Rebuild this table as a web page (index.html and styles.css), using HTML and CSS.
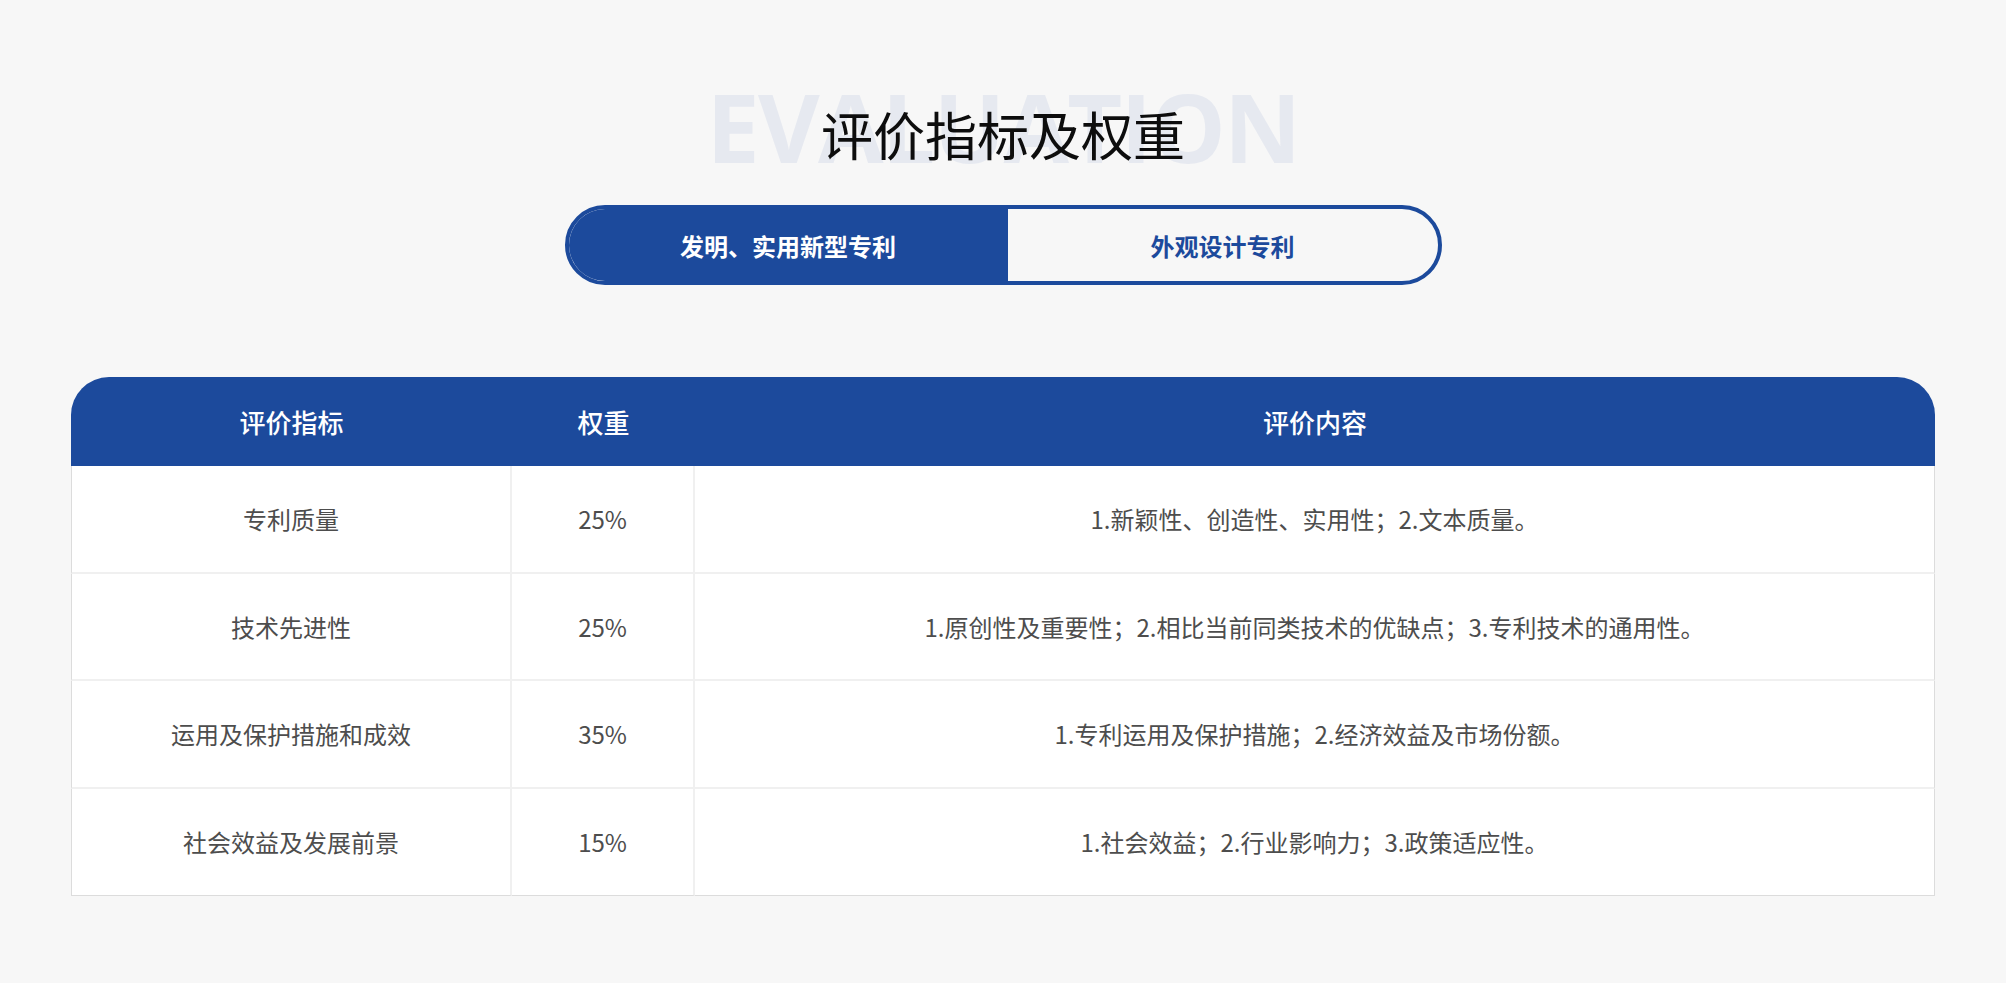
FILE: index.html
```html
<!DOCTYPE html>
<html lang="zh-CN">
<head>
<meta charset="utf-8">
<title>评价指标及权重</title>
<link rel="stylesheet" href="styles.css">
</head>
<body>
<section class="evaluation">
  <div class="heading">
    <span class="watermark" aria-hidden="true">EVALUATION</span>
    <h2 class="title">评价指标及权重</h2>
  </div>
  <div class="tabs">
    <button class="tab tab-active">发明、实用新型专利</button>
    <button class="tab">外观设计专利</button>
  </div>
  <table class="criteria">
    <colgroup>
      <col class="col-name">
      <col class="col-weight">
      <col class="col-content">
    </colgroup>
    <thead>
      <tr>
        <th>评价指标</th>
        <th>权重</th>
        <th>评价内容</th>
      </tr>
    </thead>
    <tbody>
      <tr>
        <td>专利质量</td>
        <td>25%</td>
        <td>1.新颖性、创造性、实用性；2.文本质量。</td>
      </tr>
      <tr>
        <td>技术先进性</td>
        <td>25%</td>
        <td>1.原创性及重要性；2.相比当前同类技术的优缺点；3.专利技术的通用性。</td>
      </tr>
      <tr>
        <td>运用及保护措施和成效</td>
        <td>35%</td>
        <td>1.专利运用及保护措施；2.经济效益及市场份额。</td>
      </tr>
      <tr>
        <td>社会效益及发展前景</td>
        <td>15%</td>
        <td>1.社会效益；2.行业影响力；3.政策适应性。</td>
      </tr>
    </tbody>
  </table>
</section>
</body>
</html>
```

FILE: styles.css
```css
* {
  box-sizing: border-box;
}

html, body {
  margin: 0;
  padding: 0;
  background: #f7f7f7;
}

body {
  font-family: "Noto Sans CJK SC", "Noto Sans", sans-serif;
  color: #111;
}

.evaluation {
  padding: 80px 71px 87px;
}

.heading {
  position: relative;
  height: 90px;
  display: flex;
  justify-content: center;
  align-items: flex-start;
}

.watermark {
  position: absolute;
  left: 0;
  right: 0;
  top: -19px;
  text-align: center;
  font-family: "Open Sans", "Liberation Sans", sans-serif;
  font-weight: 700;
  font-size: 95px;
  line-height: 130px;
  letter-spacing: -1.8px;
  color: #e6e9f0;
  z-index: 0;
}

.title {
  position: relative;
  z-index: 1;
  margin: 24px 0 0;
  font-size: 52px;
  font-weight: 400;
  line-height: 60px;
  color: #0d0d0d;
}

.tabs {
  width: 877px;
  height: 80px;
  margin: 35px auto 0;
  border: 4px solid #1c4a9c;
  border-radius: 40px;
  display: flex;
  overflow: hidden;
}

.tab {
  flex: 1;
  border: 0;
  margin: 0;
  padding: 0;
  background: transparent;
  font-family: "Noto Sans CJK SC", sans-serif;
  font-size: 24px;
  font-weight: 700;
  color: #1c4a9c;
  cursor: pointer;
}

.tab-active {
  flex: 0 0 439px;
  background: #1c4a9c;
  color: #fff;
}

.criteria {
  width: 100%;
  margin-top: 92px;
  border-collapse: separate;
  border-spacing: 0;
  table-layout: fixed;
}

.col-name { width: 441px; }
.col-weight { width: 183px; }

.criteria th {
  height: 89px;
  background: #1c4a9c;
  color: #fff;
  font-size: 26px;
  font-weight: 500;
  text-align: center;
  padding: 0;
}

.criteria th:first-child {
  border-top-left-radius: 38px;
}

.criteria th:last-child {
  border-top-right-radius: 38px;
}

.criteria td {
  height: 107.5px;
  background: #fff;
  text-align: center;
  font-size: 24px;
  color: #4d4d4d;
  padding: 0;
  border-bottom: 2px solid #f0f0f0;
  border-right: 2px solid #f0f0f0;
}

.criteria td:first-child {
  border-left: 1px solid #dcdcdc;
}

.criteria td:last-child {
  border-right: 1px solid #dcdcdc;
}

.criteria tbody tr:last-child td {
  border-bottom: 1px solid #dcdcdc;
}
```
